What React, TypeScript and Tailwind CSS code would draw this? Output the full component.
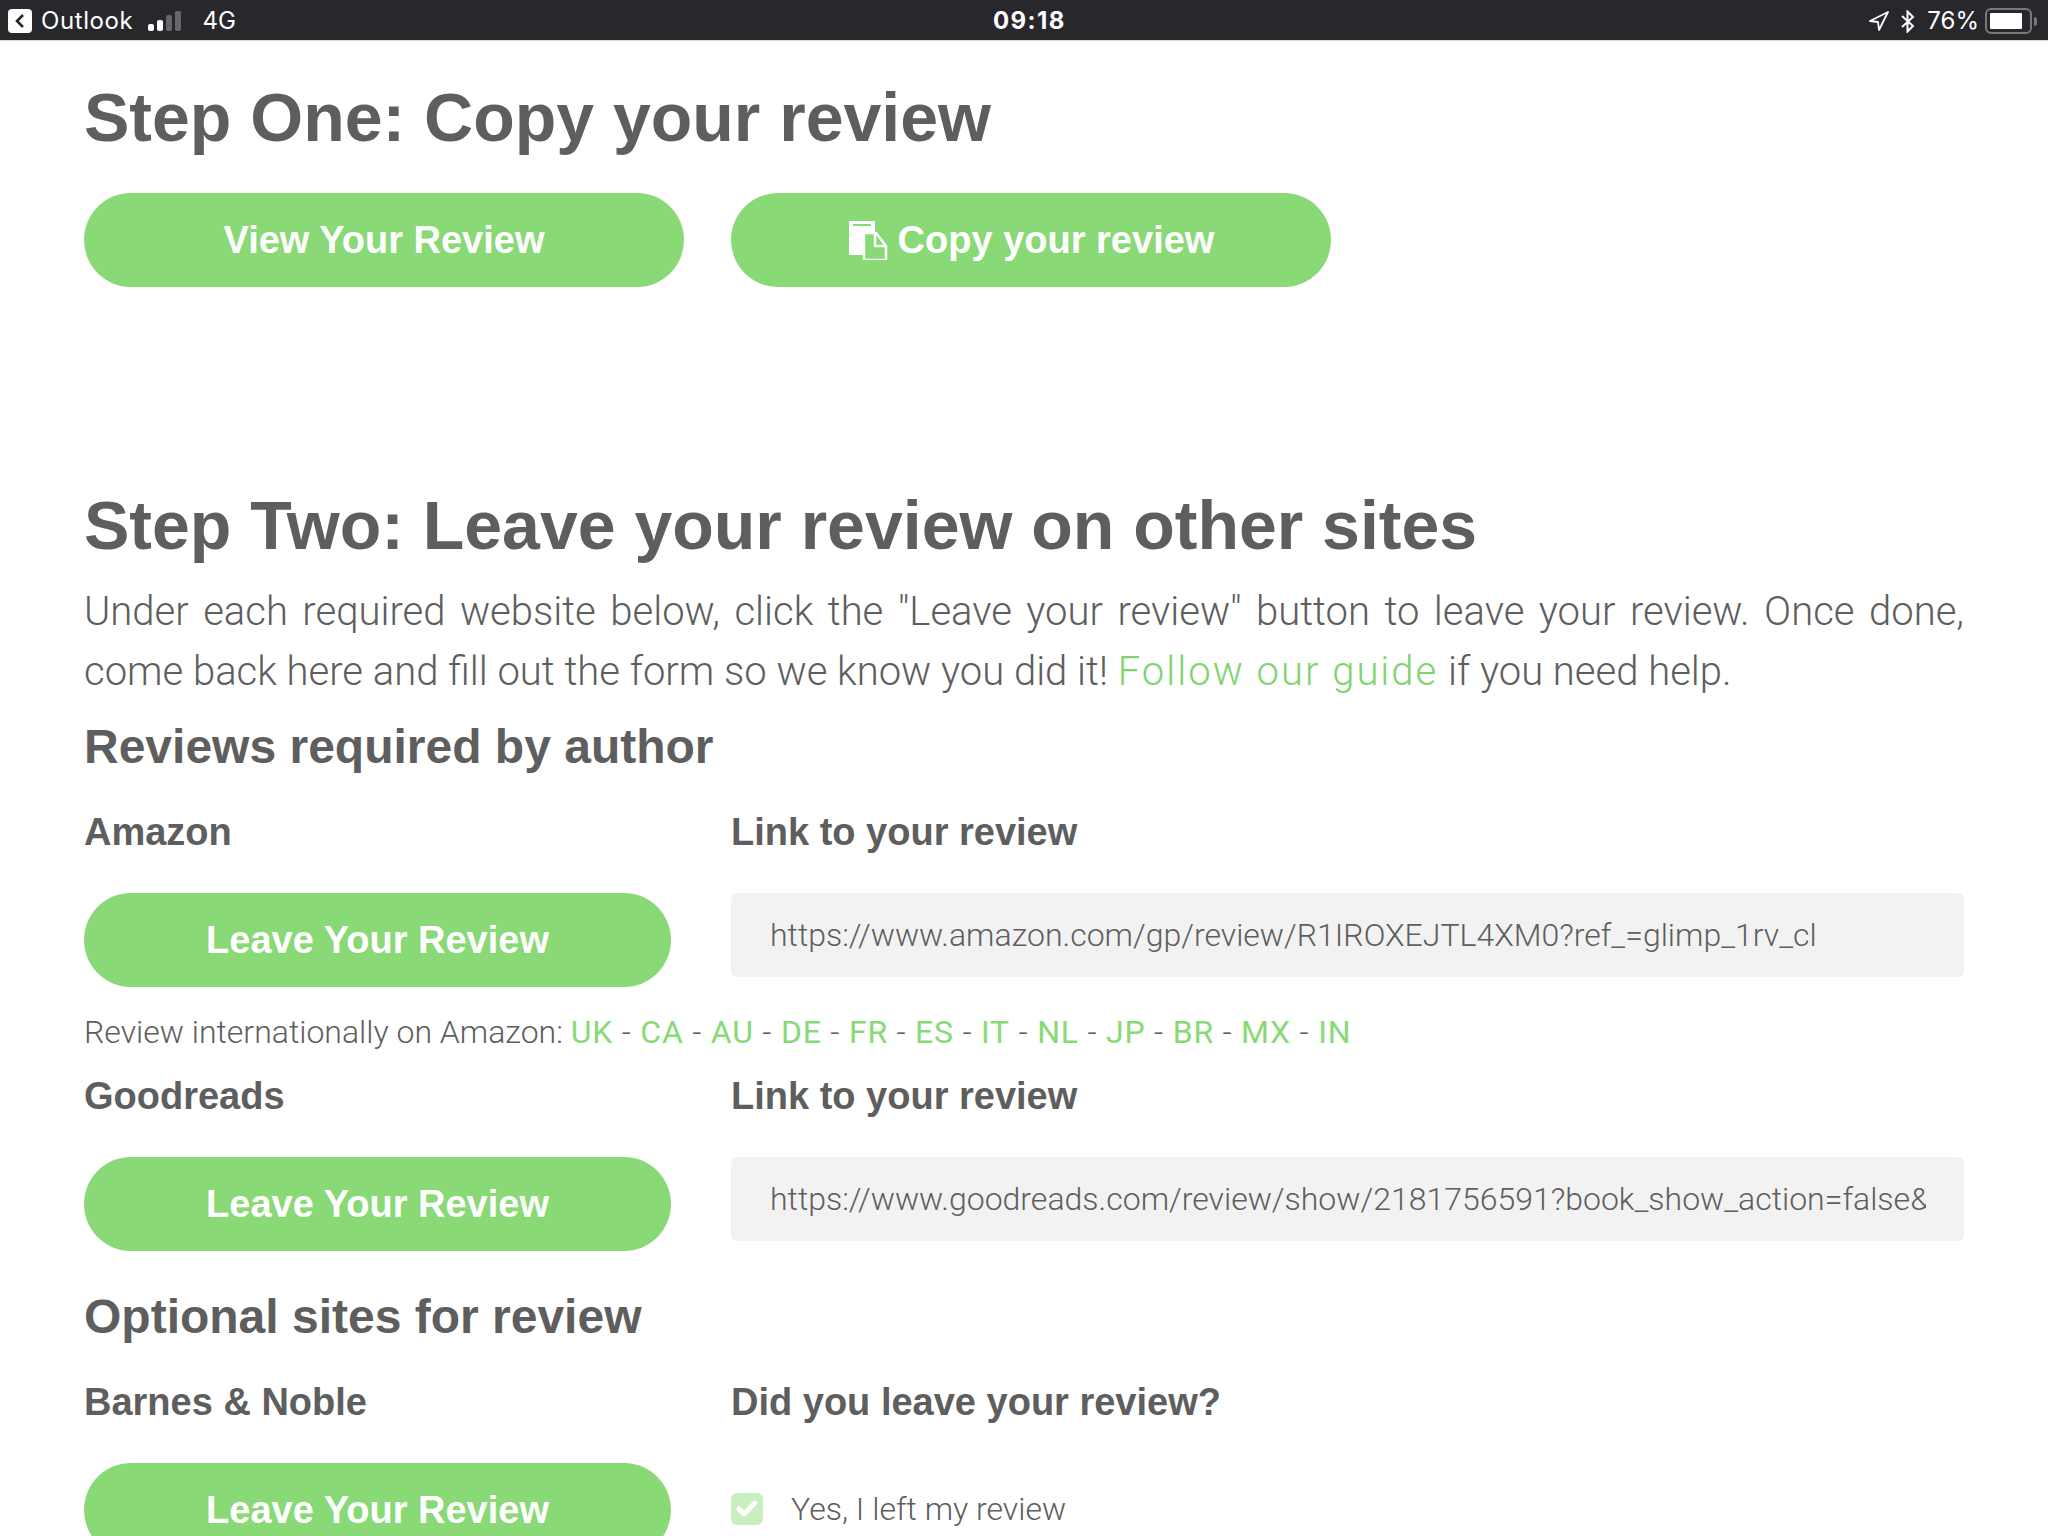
import { Check } from "lucide-react";

const heading = "font-['Liberation_Sans',sans-serif] font-bold text-[#5e5e5e]";
const body = "font-['Roboto',sans-serif] font-light text-[#5e5e5e]";
const countries = ["UK", "CA", "AU", "DE", "FR", "ES", "IT", "NL", "JP", "BR", "MX", "IN"];

function StatusBar() {
  return (
    <div className="h-[38px] pt-[2px] bg-[#27272c] border-b border-[#d8d8d8] box-content flex items-center justify-between text-white font-['Inter',sans-serif] text-[24px] leading-[38px] pl-2 pr-[11px] relative">
      <div className="flex items-center">
        <div className="w-6 h-6 rounded-[4px] bg-white flex items-center justify-center">
          <svg width="14" height="16" viewBox="0 0 14 16" fill="none">
            <path d="M10 2L4 8l6 6" stroke="#27272c" strokeWidth="2.6" />
          </svg>
        </div>
        <span className="ml-[9px] tracking-[0.6px]">Outlook</span>
        <svg className="ml-[15px]" width="33" height="20" viewBox="0 0 33 20">
          <rect x="0" y="13" width="6" height="7" rx="2" fill="#fff" />
          <rect x="9" y="9" width="6" height="11" rx="2" fill="#fff" />
          <rect x="18" y="4" width="6" height="16" rx="2" fill="#66666c" />
          <rect x="27" y="0" width="6" height="20" rx="2" fill="#66666c" />
        </svg>
        <span className="ml-[21px]">4G</span>
      </div>
      <span className="absolute left-[993px] font-bold tracking-[1.4px]">09:18</span>
      <div className="flex items-center">
        <svg width="20" height="20" viewBox="0 0 20 20" fill="none">
          <path d="M19 1L1 10l8 1 1 8z" stroke="#fff" strokeWidth="1.8" strokeLinejoin="round" />
        </svg>
        <svg className="ml-[11px]" width="15" height="23" viewBox="0 0 15 23" fill="none">
          <path d="M2 6l11 10-5.500 5.500V1.500L13 7 2 17" stroke="#fff" strokeWidth="2" />
        </svg>
        <span className="ml-[12px]">76%</span>
        <div className="ml-[6px] w-[47px] h-[26px] rounded-[6px] border-2 border-[#77777c] p-[3px]">
          <div className="w-[32px] h-full bg-white rounded-[1px]" />
        </div>
        <div className="ml-[2px] w-[3px] h-[9px] bg-[#77777c] rounded-r-full" />
      </div>
    </div>
  );
}

function CopyIcon() {
  return (
    <svg width="40" height="40" viewBox="0 0 40 40" fill="none">
      <path d="M2 1h24a1 1 0 0 1 1 1v6H2a1 1 0 0 1-1-1V2a1 1 0 0 1 1-1z" fill="#fff" />
      <path d="M1 2h26v10h-12v23H2a1 1 0 0 1-1-1z" fill="#fff" />
      <rect x="5" y="4" width="18" height="2" fill="#89d977" />
      <path d="M16 13h12l10 13v14H16z" stroke="#fff" strokeWidth="2.500" strokeLinejoin="round" />
      <path d="M27 14v12h10" stroke="#fff" strokeWidth="2.500" />
    </svg>
  );
}

function GreenButton({ width, children }: { width: string; children: React.ReactNode }) {
  return (
    <button className={`${width} h-[94px] shrink-0 rounded-[47px] bg-[#89d977] text-white text-[38px] flex items-center justify-center gap-[10px] font-['Liberation_Sans',sans-serif] font-bold`}>
      {children}
    </button>
  );
}

function UrlBox({ url }: { url: string }) {
  return (
    <div className={`${body} h-[84px] w-[1233px] bg-[#f2f2f2] rounded-[6px] pl-[39px] pr-[38px] pb-[1px] flex items-center text-[32px]`}>
      <div className="overflow-hidden whitespace-nowrap w-full">{url}</div>
    </div>
  );
}

function SiteLabels({ site, label }: { site: string; label: string }) {
  return (
    <div className={`${heading} flex text-[38px] leading-[46px]`}>
      <div className="w-[647px]">{site}</div>
      <div>{label}</div>
    </div>
  );
}

export default function App() {
  return (
    <div className="w-[2048px] h-[1536px] overflow-hidden bg-white">
      <StatusBar />
      <div className="px-[84px]">
        <h1 className={`${heading} text-[68px] leading-[80px] mt-[36px]`}>Step One: Copy your review</h1>
        <div className="flex gap-[47px] mt-[36px]">
          <GreenButton width="w-[600px]">View Your Review</GreenButton>
          <GreenButton width="w-[600px]">
            <CopyIcon />
            Copy your review
          </GreenButton>
        </div>

        <h2 className={`${heading} text-[68px] leading-[80px] mt-[198px]`}>Step Two: Leave your review on other sites</h2>
        <p className={`${body} text-[40px] leading-[60px] text-justify mt-[17px]`}>
          Under each required website below, click the "Leave your review" button to leave your review. Once done, come
          back here and fill out the form so we know you did it! <span className="text-[#80d46e] tracking-[2px]">Follow our guide</span> if you need help.
        </p>

        <h3 className={`${heading} text-[48px] leading-[56px] mt-[17px]`}>Reviews required by author</h3>
        <div className="mt-[34px]">
          <SiteLabels site="Amazon" label="Link to your review" />
        </div>
        <div className="flex items-start gap-[60px] mt-[38px]">
          <GreenButton width="w-[587px]">Leave Your Review</GreenButton>
          <UrlBox url="https://www.amazon.com/gp/review/R1IROXEJTL4XM0?ref_=glimp_1rv_cl" />
        </div>
        <p className={`${body} text-[32px] leading-[46px] mt-[22px]`}>
          Review internationally on Amazon:{" "}
          {countries.map((c, i) => (
            <span key={c} className="tracking-[0.8px]">
              <span className="text-[#89d977] font-normal">{c}</span>
              {i < countries.length - 1 ? " - " : ""}
            </span>
          ))}
        </p>
        <div className="mt-[18px]">
          <SiteLabels site="Goodreads" label="Link to your review" />
        </div>
        <div className="flex items-start gap-[60px] mt-[38px]">
          <GreenButton width="w-[587px]">Leave Your Review</GreenButton>
          <UrlBox url="https://www.goodreads.com/review/show/2181756591?book_show_action=false&" />
        </div>

        <h3 className={`${heading} text-[48px] leading-[56px] mt-[38px]`}>Optional sites for review</h3>
        <div className="mt-[34px]">
          <SiteLabels site="Barnes & Noble" label="Did you leave your review?" />
        </div>
        <div className="flex items-start gap-[60px] mt-[38px]">
          <GreenButton width="w-[587px]">Leave Your Review</GreenButton>
          <div className="flex items-center mt-[23px]">
            <div className="w-8 h-8 rounded-[6px] bg-[#c9efc1] flex items-center justify-center">
              <Check size={24} color="#fff" strokeWidth={5} />
            </div>
            <span className={`${body} text-[32px] ml-[28px] leading-[46px]`}>Yes, I left my review</span>
          </div>
        </div>
      </div>
    </div>
  );
}
